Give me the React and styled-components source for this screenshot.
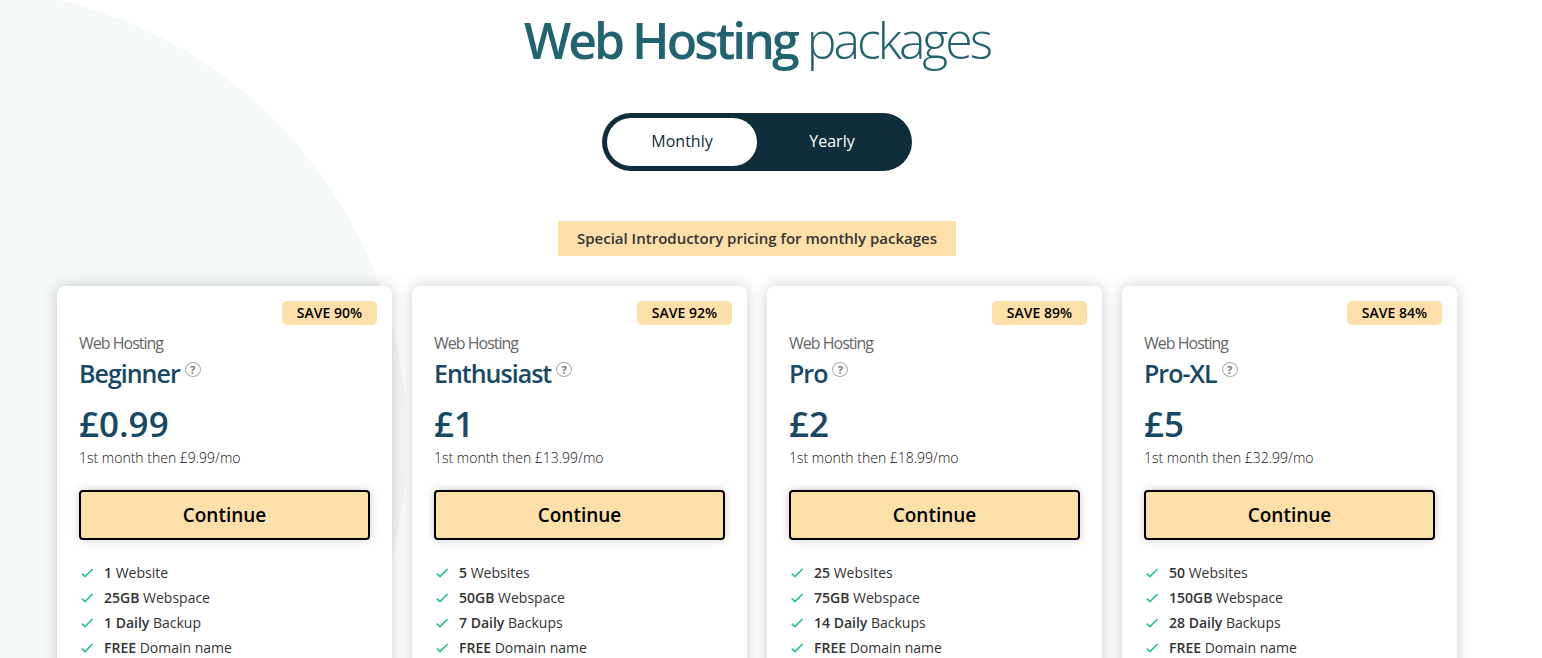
import React, { useState } from "react";
import styled, { createGlobalStyle } from "styled-components";

const GlobalStyle = createGlobalStyle`
  *, *::before, *::after { box-sizing: border-box; }
  body {
    margin: 0;
    background: #ffffff;
    color: #333333;
    font-family: "Open Sans", "Noto Sans", sans-serif;
    font-size: 14px;
    line-height: 25px;
  }
`;

const Page = styled.main`
  position: relative;
  overflow: hidden;
  max-height: 100vh;
  padding: 10px 28px 40px 0;
`;

const Backdrop = styled.div`
  position: absolute;
  left: -497px;
  top: -12px;
  width: 904px;
  height: 904px;
  border-radius: 50%;
  background: #f5f9fa;
`;

const Content = styled.div`
  position: relative;
  display: flex;
  flex-direction: column;
  align-items: center;
  max-width: 1400px;
  margin: 0 auto;
`;

const Title = styled.h1`
  margin: 0 0 43px;
  color: #21646f;
  font-size: 50px;
  line-height: 60px;
  font-weight: 300;
  letter-spacing: -3px;

  strong { font-weight: 600; }
`;

const Toggle = styled.div`
  display: flex;
  padding: 5px;
  margin-bottom: 50px;
  border-radius: 29px;
  background: #0f2d3a;
`;

const ToggleButton = styled.button`
  width: 150px;
  height: 48px;
  padding: 0 0 2px;
  border: 0;
  border-radius: 24px;
  background: ${(p) => (p.$active ? "#ffffff" : "transparent")};
  color: ${(p) => (p.$active ? "#0f2d3a" : "#ffffff")};
  font-family: inherit;
  font-size: 16px;
  font-weight: ${(p) => (p.$active ? 400 : 500)};
  cursor: pointer;
`;

const Notice = styled.p`
  margin: 0 0 30px;
  padding: 5px 19px;
  background: #fde0a9;
  font-size: 15px;
  font-weight: 600;
`;

const Plans = styled.div`
  display: grid;
  grid-template-columns: repeat(4, 1fr);
  gap: 20px;
  width: 100%;
`;

const Card = styled.article`
  display: flex;
  flex-direction: column;
  padding: 15px 22px 30px;
  border-radius: 8px;
  background: #ffffff;
  box-shadow: 0 0 15px rgba(0, 0, 0, 0.2);
`;

const Badge = styled.span`
  align-self: flex-end;
  margin-right: -7px;
  padding: 0 15px;
  border-radius: 5px;
  background: #fde0a9;
  color: #000000;
  font-size: 14px;
  line-height: 24px;
  font-weight: 600;
`;

const Category = styled.p`
  margin: 6px 0 0;
  color: #666666;
  font-size: 16px;
  line-height: 24px;
  letter-spacing: -1px;
`;

const NameRow = styled.div`
  display: flex;
  gap: 5px;
  margin-bottom: 12px;
`;

const Name = styled.h2`
  margin: 0;
  color: #174865;
  font-size: 25px;
  line-height: 36px;
  font-weight: 600;
  letter-spacing: -1px;
`;

const Help = styled.button`
  width: 16px;
  height: 15px;
  margin-top: 7px;
  padding: 0;
  border: 1px solid #aaaaaa;
  border-radius: 50%;
  background: transparent;
  color: #777777;
  font-family: inherit;
  font-size: 11px;
  line-height: 13px;
  font-weight: 700;
  cursor: pointer;
`;

const Price = styled.p`
  margin: 0;
  color: #174865;
  font-size: 35px;
  line-height: 42px;
  font-weight: 600;
`;

const Terms = styled.p`
  margin: 0 0 20px;
  color: #111111;
  font-weight: 300;
`;

const Continue = styled.button`
  height: 50px;
  margin-bottom: 20px;
  padding: 0 0 1px;
  border: 2px solid #000000;
  border-radius: 4px;
  background: #fde0a9;
  box-shadow: 0 0 10px rgba(0, 0, 0, 0.2);
  color: #000000;
  font-family: inherit;
  font-size: 19px;
  font-weight: 600;
  cursor: pointer;
`;

const Features = styled.ul`
  margin: 0;
  padding: 0;
  list-style: none;
`;

const Feature = styled.li`
  display: flex;
  align-items: center;
  gap: 9px;

  strong { font-weight: 600; }
`;

const CheckIcon = styled.svg`
  width: 16px;
  height: 16px;
  fill: none;
  stroke: #26c296;
  stroke-width: 1.7;
`;

const plans = [
  { name: "Beginner", save: 90, price: "0.99", then: "9.99", features: [["1", "Website"], ["25GB", "Webspace"], ["1 Daily", "Backup"], ["FREE", "Domain name"]] },
  { name: "Enthusiast", save: 92, price: "1", then: "13.99", features: [["5", "Websites"], ["50GB", "Webspace"], ["7 Daily", "Backups"], ["FREE", "Domain name"]] },
  { name: "Pro", save: 89, price: "2", then: "18.99", features: [["25", "Websites"], ["75GB", "Webspace"], ["14 Daily", "Backups"], ["FREE", "Domain name"]] },
  { name: "Pro-XL", save: 84, price: "5", then: "32.99", features: [["50", "Websites"], ["150GB", "Webspace"], ["28 Daily", "Backups"], ["FREE", "Domain name"]] },
];

function PlanCard({ plan }) {
  return (
    <Card>
      <Badge>SAVE {plan.save}%</Badge>
      <Category>Web Hosting</Category>
      <NameRow>
        <Name>{plan.name}</Name>
        <Help type="button">?</Help>
      </NameRow>
      <Price>£{plan.price}</Price>
      <Terms>1st month then £{plan.then}/mo</Terms>
      <Continue type="button">Continue</Continue>
      <Features>
        {plan.features.map(([amount, label]) => (
          <Feature key={label}>
            <CheckIcon viewBox="0 0 16 16" aria-hidden="true">
              <path d="M2.8 8.6 6 11.6 13.6 4" />
            </CheckIcon>
            <span><strong>{amount}</strong> {label}</span>
          </Feature>
        ))}
      </Features>
    </Card>
  );
}

export default function App() {
  const [period, setPeriod] = useState("Monthly");
  return (
    <Page>
      <GlobalStyle />
      <Backdrop />
      <Content>
        <Title><strong>Web Hosting</strong> packages</Title>
        <Toggle role="group">
          {["Monthly", "Yearly"].map((option) => (
            <ToggleButton
              key={option}
              type="button"
              $active={period === option}
              aria-pressed={period === option}
              onClick={() => setPeriod(option)}
            >
              {option}
            </ToggleButton>
          ))}
        </Toggle>
        <Notice>Special Introductory pricing for monthly packages</Notice>
        <Plans>
          {plans.map((plan) => <PlanCard key={plan.name} plan={plan} />)}
        </Plans>
      </Content>
    </Page>
  );
}
